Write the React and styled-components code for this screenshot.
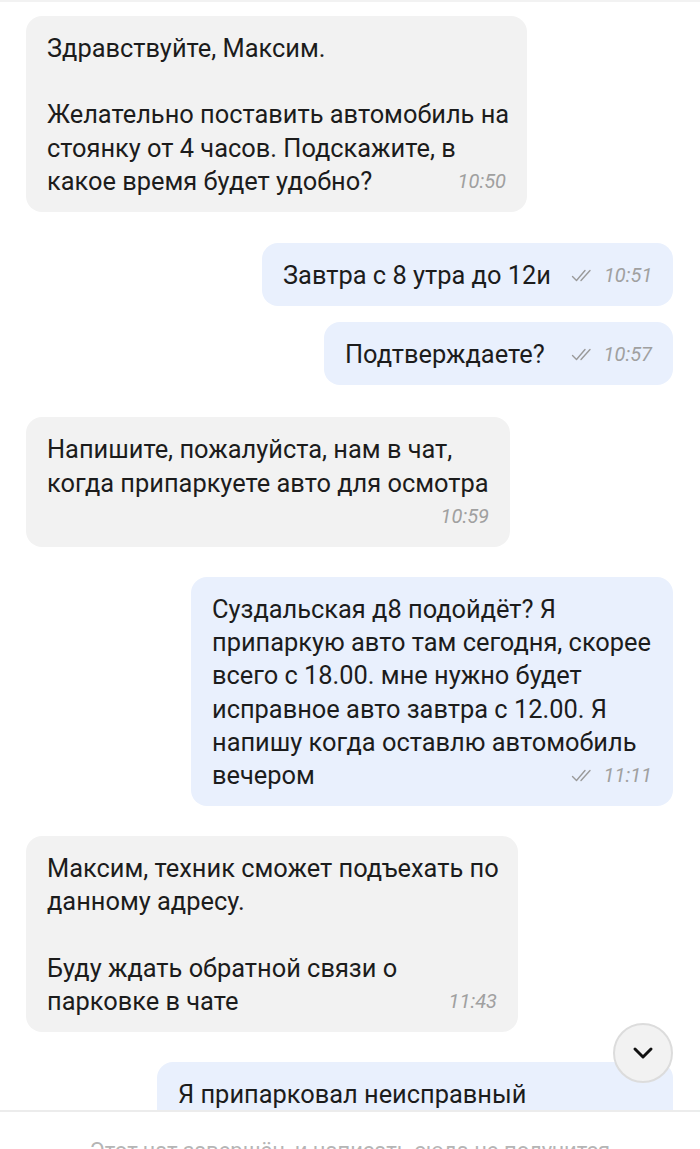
import React from "react";
import styled, { createGlobalStyle } from "styled-components";

const GlobalStyle = createGlobalStyle`
  html, body {
    margin: 0;
    padding: 0;
    background: #fff;
  }
  body {
    font-family: Roboto, "Noto Sans", "Liberation Sans", sans-serif;
    color: #1c1c1c;
  }
`;

const Screen = styled.div`
  position: relative;
  width: 700px;
  height: 1149px;
  display: flex;
  flex-direction: column;
  overflow: hidden;
  background: #fff;
  border-top: 2px solid #f2f2f2;
  box-sizing: border-box;
`;

const Feed = styled.div`
  flex: 1;
  overflow: hidden;
  display: flex;
  flex-direction: column;
  padding: 14px 27px 0 26px;
`;

const Bubble = styled.div`
  align-self: ${(p) => (p.$out ? "flex-end" : "flex-start")};
  width: ${(p) => p.$width}px;
  box-sizing: border-box;
  margin-top: ${(p) => p.$gap}px;
  padding: 16px 21px 14px 21px;
  border-radius: 16px;
  background: ${(p) => (p.$out ? "#e9f0fd" : "#f2f2f2")};
  flex-shrink: 0;
`;

const Line = styled.div`
  font-size: 25.4px;
  line-height: 33.2px;
  min-height: 33.2px;
  white-space: nowrap;
  display: flex;
  align-items: center;
  justify-content: space-between;
`;

const Meta = styled.span`
  display: inline-flex;
  align-items: center;
  gap: 9px;
  font-size: 20px;
  font-style: italic;
  color: #a0a0a0;
  margin-left: auto;
  padding-left: 20px;
`;

const Check = styled.svg`
  width: 24px;
  height: 13px;
  flex-shrink: 0;
`;

const ScrollDown = styled.button`
  position: absolute;
  left: 613px;
  top: 1021px;
  width: 60px;
  height: 60px;
  border-radius: 50%;
  border: 2px solid #dcdcdc;
  background: #f2f2f2;
  display: flex;
  align-items: center;
  justify-content: center;
  padding: 0;
  box-sizing: border-box;
  z-index: 2;
`;

const Footer = styled.div`
  height: 39px;
  flex-shrink: 0;
  border-top: 2px solid #ececec;
  box-sizing: border-box;
  background: #fff;
  overflow: hidden;
  display: flex;
  justify-content: center;
`;

const FooterNote = styled.div`
  padding-top: 26px;
  font-size: 22px;
  color: #b5b5b5;
  white-space: nowrap;
`;

const messages = [
  {
    out: false,
    width: 501,
    gap: 0,
    lines: [
      "Здравствуйте, Максим.",
      "",
      "Желательно поставить автомобиль на",
      "стоянку от 4 часов. Подскажите, в",
      "какое время будет удобно?",
    ],
    time: "10:50",
  },
  {
    out: true,
    width: 411,
    gap: 31,
    lines: ["Завтра с 8 утра до 12и"],
    time: "10:51",
  },
  {
    out: true,
    width: 349,
    gap: 16,
    lines: ["Подтверждаете?"],
    time: "10:57",
  },
  {
    out: false,
    width: 484,
    gap: 32,
    lines: [
      "Напишите, пожалуйста, нам в чат,",
      "когда припаркуете авто для осмотра",
      "",
    ],
    time: "10:59",
  },
  {
    out: true,
    width: 482,
    gap: 30,
    lines: [
      "Суздальская д8 подойдёт? Я",
      "припаркую авто там сегодня, скорее",
      "всего с 18.00. мне нужно будет",
      "исправное авто завтра с 12.00. Я",
      "напишу когда оставлю автомобиль",
      "вечером",
    ],
    time: "11:11",
  },
  {
    out: false,
    width: 492,
    gap: 30,
    lines: [
      "Максим, техник сможет подъехать по",
      "данному адресу.",
      "",
      "Буду ждать обратной связи о",
      "парковке в чате",
    ],
    time: "11:43",
  },
  {
    out: true,
    width: 516,
    gap: 30,
    lines: ["Я припарковал неисправный"],
    time: null,
  },
];

function DoubleCheck() {
  return (
    <Check viewBox="0 0 24 13" fill="none" stroke="#9a9a9a" strokeWidth="1.4" strokeLinecap="round" strokeLinejoin="round">
      <path d="M1.5 7.5 L5.5 11.5 L14 1.5" />
      <path d="M10 11.5 L19 1.5" />
    </Check>
  );
}

function Message({ out, width, gap, lines, time }) {
  const last = lines.length - 1;
  return (
    <Bubble $out={out} $width={width} $gap={gap}>
      {lines.map((text, i) => (
        <Line key={i}>
          <span>{text}</span>
          {i === last && time && (
            <Meta>
              {out && <DoubleCheck />}
              {time}
            </Meta>
          )}
        </Line>
      ))}
    </Bubble>
  );
}

export default function App() {
  return (
    <>
      <GlobalStyle />
      <Screen>
        <Feed>
          {messages.map((m, i) => (
            <Message key={i} {...m} />
          ))}
        </Feed>
        <ScrollDown aria-label="Вниз">
          <svg width="22" height="14" viewBox="0 0 22 14" fill="none" stroke="#111" strokeWidth="3" strokeLinecap="round" strokeLinejoin="round">
            <path d="M3 3 L11 11 L19 3" />
          </svg>
        </ScrollDown>
        <Footer>
          <FooterNote>Этот чат завершён, и написать сюда не получится</FooterNote>
        </Footer>
      </Screen>
    </>
  );
}
